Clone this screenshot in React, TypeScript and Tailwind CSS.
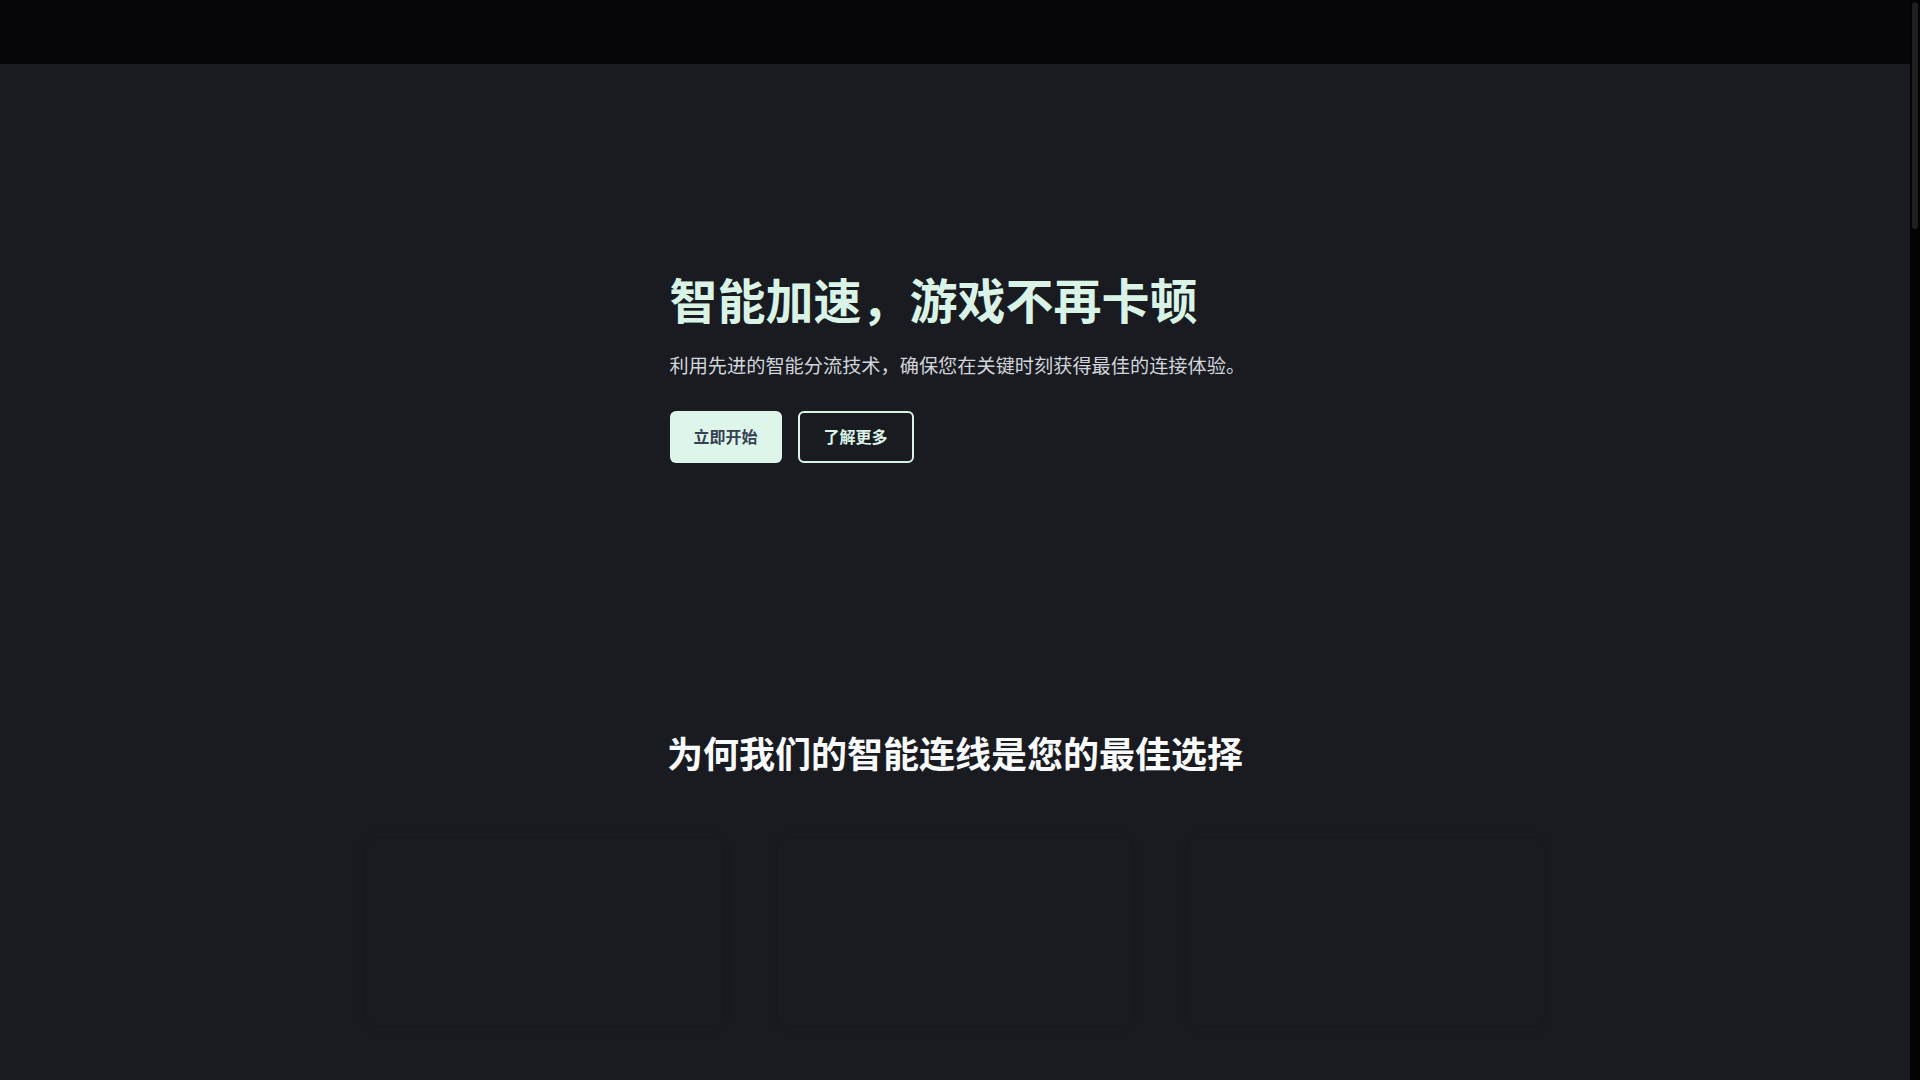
import { Zap, Shield, Gauge } from 'lucide-react';

const features = [
  {
    icon: Zap,
    title: '智能分流',
    description: '自动识别游戏流量，选择最优线路，延迟降低高达 60%。',
  },
  {
    icon: Shield,
    title: '稳定可靠',
    description: '多节点冗余备份，断线自动切换，告别掉线与卡顿。',
  },
  {
    icon: Gauge,
    title: '实时监控',
    description: '实时查看延迟与丢包情况，网络状态一目了然。',
  },
];

const steps = [
  { no: '01', title: '下载客户端', text: '支持 Windows、macOS、Android 与 iOS。' },
  { no: '02', title: '选择游戏', text: '从游戏库中选择您要加速的游戏。' },
  { no: '03', title: '一键加速', text: '智能匹配最佳节点，立即畅玩。' },
];

const plans = [
  { name: '基础版', price: '¥15', period: '/月' },
  { name: '专业版', price: '¥30', period: '/月' },
  { name: '年度版', price: '¥288', period: '/年' },
];

const faqs = [
  '加速器会影响我的正常上网吗？',
  '支持哪些游戏和平台？',
  '可以同时在几台设备上使用？',
  '如何申请退款？',
];

const App = () => {
  return (
    <div className="flex h-screen bg-[#030306] text-gray-100 [font-family:Inter,'Noto_Sans_CJK_SC',sans-serif]">
      <main className="flex-1 h-screen overflow-y-auto bg-[#1a1b20] [scrollbar-width:none]">
        {/* Header */}
        <header className="h-16 bg-[#05050a]" />

        {/* Hero */}
        <section className="pt-[214px] pb-[272px]">
          <div className="w-[571px] mx-auto">
            <h1 className="text-5xl leading-none font-bold text-[#d9f4e6] mb-6 whitespace-nowrap">
              智能加速，游戏不再卡顿
            </h1>
            <p className="text-[19.2px] leading-[33px] text-gray-300 whitespace-nowrap">
              利用先进的智能分流技术，确保您在关键时刻获得最佳的连接体验。
            </p>
            <div className="flex gap-4 mt-7">
              <button className="px-6 py-3.5 rounded-md bg-[#def5e9] text-gray-700 font-bold text-base leading-6">
                立即开始
              </button>
              <button className="px-6 py-3 rounded-md border-2 border-[#d9f4e6] text-[#d9f4e6] font-bold text-base leading-6">
                了解更多
              </button>
            </div>
          </div>
        </section>

        {/* Features */}
        <section className="pb-32">
          <h2 className="text-4xl leading-10 font-bold text-center text-gray-50 mb-[62px]">
            为何我们的智能连线是您的最佳选择
          </h2>
          <div className="grid grid-cols-3 gap-[52px] w-[1180px] mx-auto">
            {features.map((feature) => {
              const Icon = feature.icon;
              return (
                <div
                  key={feature.title}
                  className="h-[190px] rounded-xl border border-black/10 bg-[#1a1b20] shadow-[0_0_10px_rgba(0,0,0,0.1)] p-8"
                >
                  <div className="opacity-0">
                    <Icon className="h-10 w-10 text-[#d9f4e6] mb-4" />
                    <h3 className="text-xl font-bold mb-2">{feature.title}</h3>
                    <p className="text-gray-400">{feature.description}</p>
                  </div>
                </div>
              );
            })}
          </div>
        </section>

        {/* How it works */}
        <section className="py-32 opacity-0">
          <h2 className="text-4xl font-bold text-center mb-16">三步开启极速体验</h2>
          <div className="grid grid-cols-3 gap-12 w-[1180px] mx-auto">
            {steps.map((step) => (
              <div key={step.no} className="h-[320px] rounded-xl bg-[#202128] p-8">
                <div className="text-5xl font-bold text-[#d9f4e6] mb-6">{step.no}</div>
                <h3 className="text-2xl font-bold mb-3">{step.title}</h3>
                <p className="text-gray-400">{step.text}</p>
              </div>
            ))}
          </div>
        </section>

        {/* Stats */}
        <section className="py-32 bg-[#15161a] opacity-0">
          <div className="grid grid-cols-4 gap-8 w-[1180px] mx-auto text-center">
            {[
              ['500+', '全球节点'],
              ['3000+', '支持游戏'],
              ['99.9%', '在线率'],
              ['1000万+', '用户信赖'],
            ].map(([value, label]) => (
              <div key={label} className="py-12">
                <div className="text-5xl font-bold text-[#d9f4e6] mb-3">{value}</div>
                <div className="text-gray-400">{label}</div>
              </div>
            ))}
          </div>
        </section>

        {/* Pricing */}
        <section className="py-32 opacity-0">
          <h2 className="text-4xl font-bold text-center mb-16">选择适合您的方案</h2>
          <div className="grid grid-cols-3 gap-12 w-[1180px] mx-auto">
            {plans.map((plan) => (
              <div key={plan.name} className="h-[480px] rounded-xl border border-white/10 p-10">
                <h3 className="text-2xl font-bold mb-6">{plan.name}</h3>
                <div className="text-5xl font-bold text-[#d9f4e6]">
                  {plan.price}
                  <span className="text-lg text-gray-400">{plan.period}</span>
                </div>
              </div>
            ))}
          </div>
        </section>

        {/* FAQ */}
        <section className="py-32 opacity-0">
          <h2 className="text-4xl font-bold text-center mb-16">常见问题</h2>
          <div className="max-w-3xl mx-auto space-y-4">
            {faqs.map((q) => (
              <div key={q} className="rounded-lg bg-[#202128] px-6 py-6 text-lg">
                {q}
              </div>
            ))}
          </div>
        </section>

        {/* CTA */}
        <section className="py-32 opacity-0">
          <div className="max-w-3xl mx-auto text-center">
            <h2 className="text-4xl font-bold mb-6">准备好告别延迟了吗？</h2>
            <p className="text-lg text-gray-400 mb-10">立即下载，免费试用 7 天。</p>
            <button className="px-8 py-4 rounded-md bg-[#def5e9] text-gray-700 font-bold">
              免费下载
            </button>
          </div>
        </section>

        {/* Footer */}
        <footer className="py-16 bg-[#05050a] opacity-0">
          <p className="text-center text-sm text-gray-500">© 2024 智能加速器 保留所有权利</p>
        </footer>
      </main>

      {/* Scrollbar track */}
      <div className="w-[10px] shrink-0 pt-[2px] px-[2px]">
        <div className="h-[227px] rounded-full bg-[#1e1e20]" />
      </div>
    </div>
  );
};

export default App;
